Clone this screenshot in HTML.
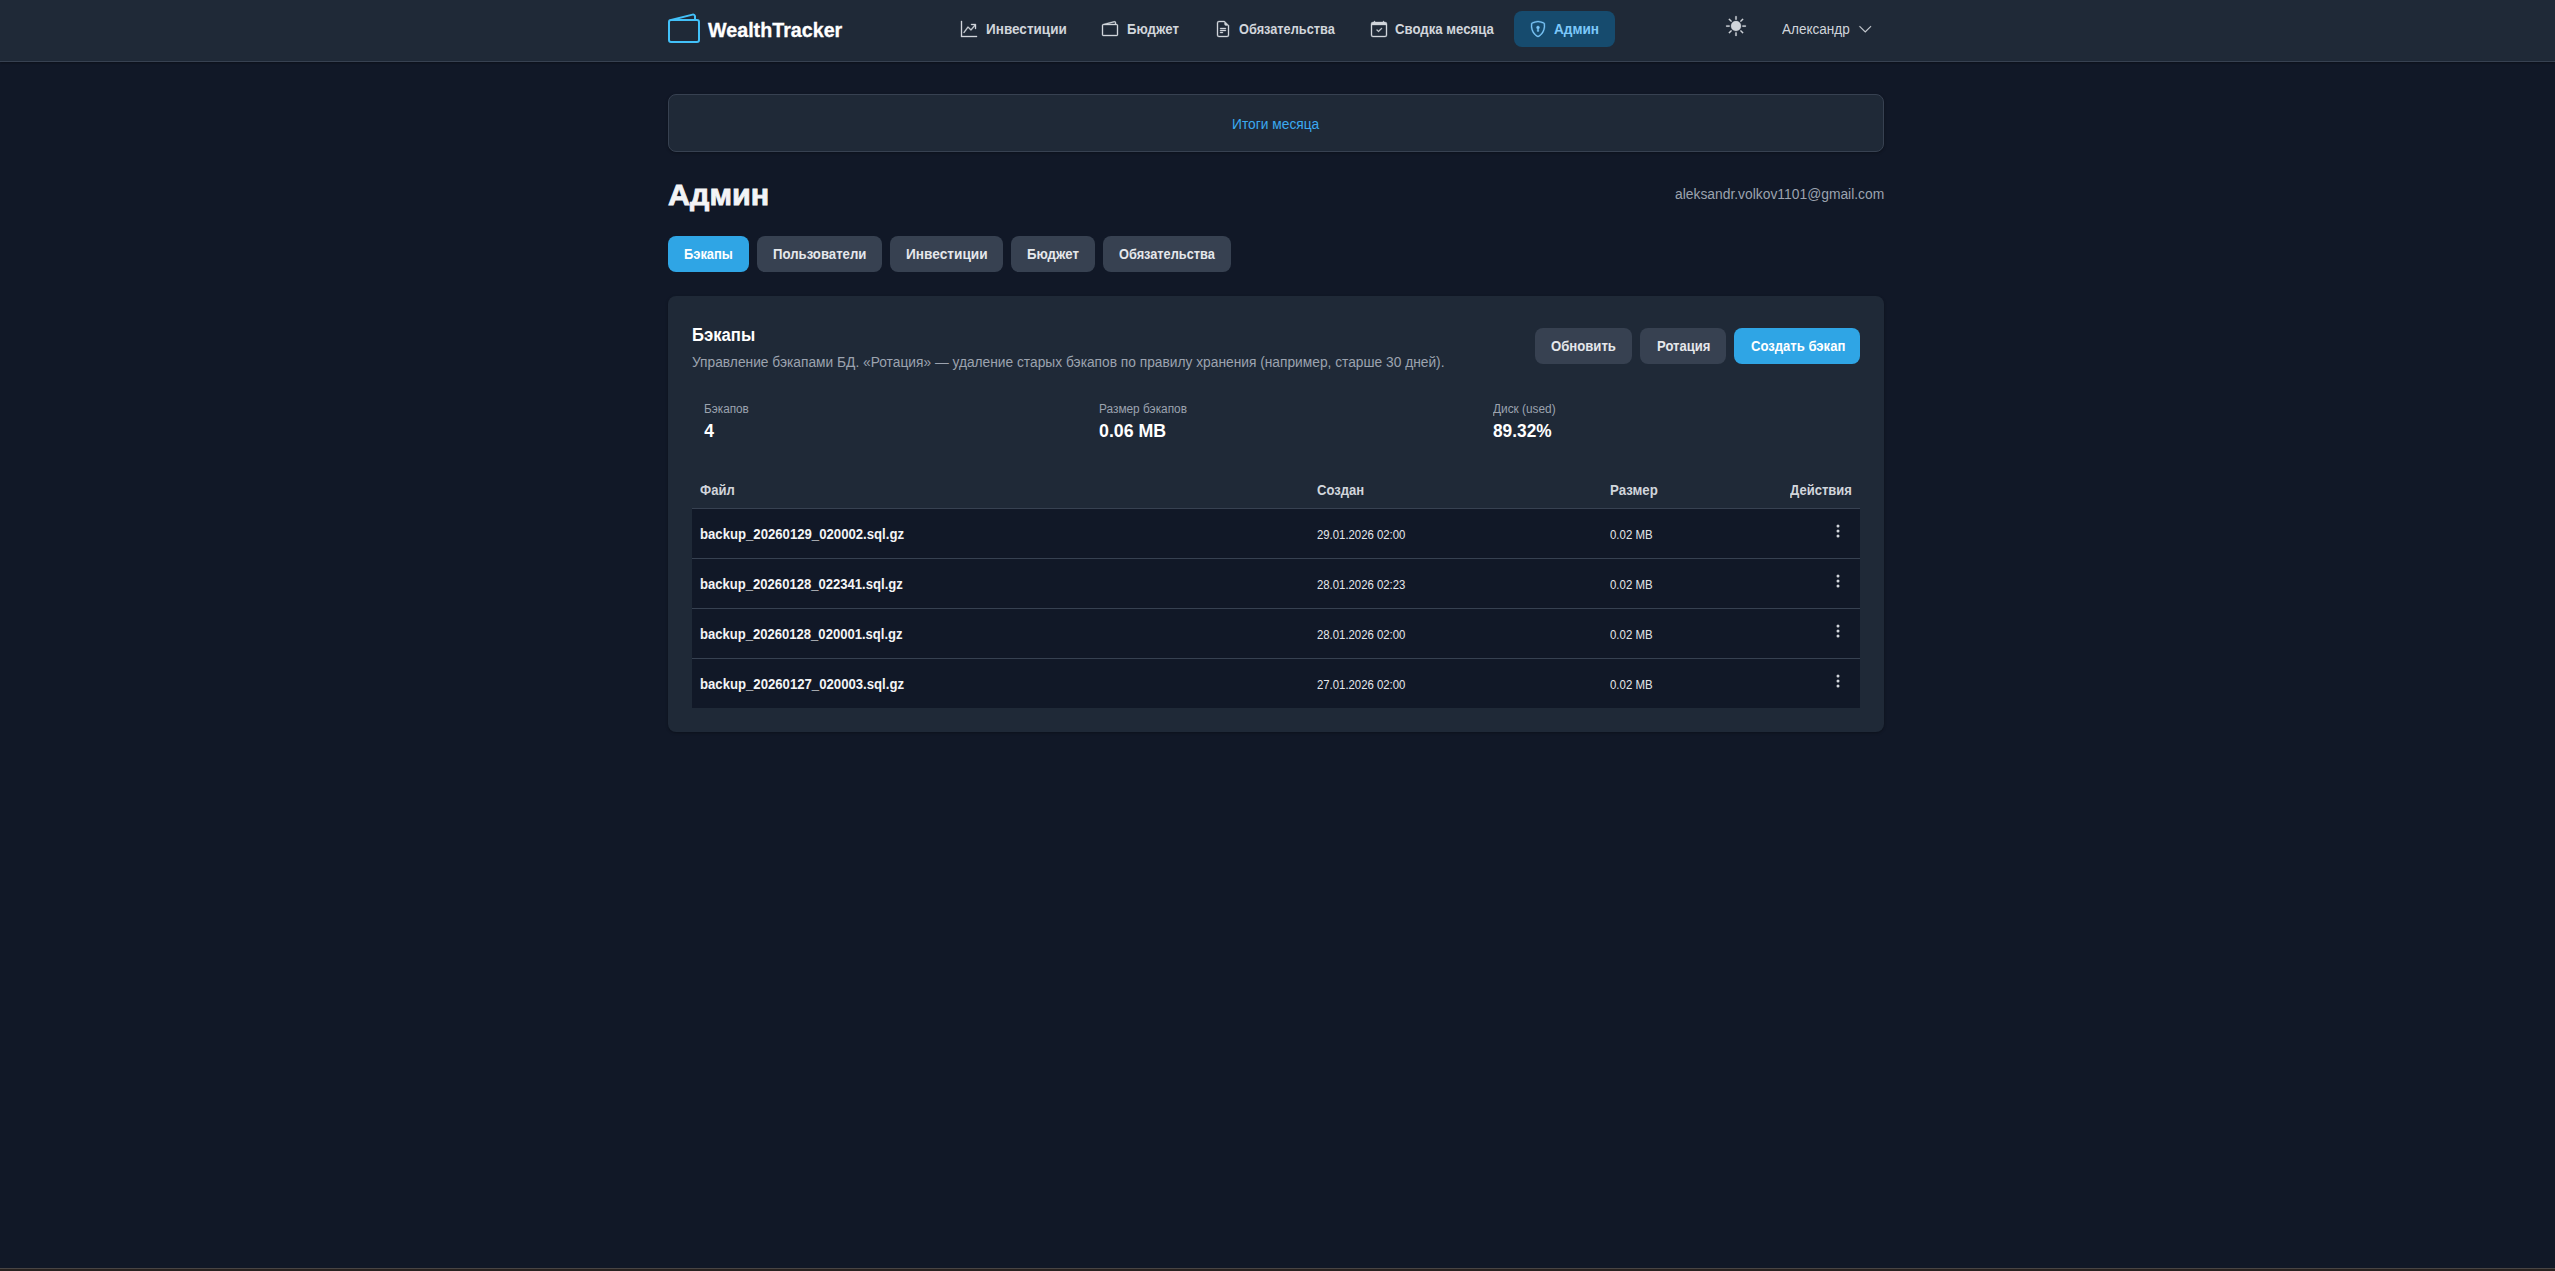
<!DOCTYPE html>
<html lang="ru"><head><meta charset="utf-8"><title>WealthTracker — Админ</title>
<style>
html,body{margin:0;padding:0}
body{width:2555px;height:1271px;background:#111827;position:relative;overflow:hidden;font-family:"Liberation Sans", sans-serif}
span{position:absolute;white-space:nowrap;line-height:1;transform-origin:0 50%}
svg{display:block}
</style></head><body>
<nav>
<div style="position:absolute;left:0px;top:0px;width:2555px;height:61px;background:#1f2937;border-bottom:1px solid #374151;box-shadow:0 1px 2px rgba(0,0,0,.35)"></div>
<svg style="position:absolute;left:668px;top:12.5px;overflow:visible" width="32" height="32" viewBox="0 0 16 16" fill="#42c1f9"><path d="M12.136.326A1.5 1.5 0 0 1 14 1.78V3h.5A1.5 1.5 0 0 1 16 4.5v9a1.5 1.5 0 0 1-1.5 1.5h-13A1.5 1.5 0 0 1 0 13.5v-9a1.5 1.5 0 0 1 1.432-1.499L12.136.326zM5.562 3H13V1.78a.5.5 0 0 0-.621-.484L5.562 3zM1.5 4a.5.5 0 0 0-.5.5v9a.5.5 0 0 0 .5.5h13a.5.5 0 0 0 .5-.5v-9a.5.5 0 0 0-.5-.5h-13z"/></svg>
<div style="position:absolute;left:1514px;top:11px;width:101px;height:36px;background:#164b6e;border-radius:8px"></div>
<svg style="position:absolute;left:961px;top:21px;overflow:visible" width="16" height="16" viewBox="0 0 16 16" fill="#d1d5db" stroke="#d1d5db" stroke-width="0.35" stroke-linejoin="round"><path fill-rule="evenodd" d="M0 0h1v15h15v1H0V0Zm10 3.5a.5.5 0 0 1 .5-.5h4a.5.5 0 0 1 .5.5v4a.5.5 0 0 1-1 0V4.9l-3.613 4.417a.5.5 0 0 1-.74.037L7.06 6.767l-3.656 5.027a.5.5 0 0 1-.808-.588l4-5.5a.5.5 0 0 1 .758-.06l2.609 2.61L13.445 4H10.5a.5.5 0 0 1-.5-.5Z"/></svg>
<svg style="position:absolute;left:1102px;top:21px;overflow:visible" width="16" height="16" viewBox="0 0 16 16" fill="#d1d5db" stroke="#d1d5db" stroke-width="0.35" stroke-linejoin="round"><path d="M12.136.326A1.5 1.5 0 0 1 14 1.78V3h.5A1.5 1.5 0 0 1 16 4.5v9a1.5 1.5 0 0 1-1.5 1.5h-13A1.5 1.5 0 0 1 0 13.5v-9a1.5 1.5 0 0 1 1.432-1.499L12.136.326zM5.562 3H13V1.78a.5.5 0 0 0-.621-.484L5.562 3zM1.5 4a.5.5 0 0 0-.5.5v9a.5.5 0 0 0 .5.5h13a.5.5 0 0 0 .5-.5v-9a.5.5 0 0 0-.5-.5h-13z"/></svg>
<svg style="position:absolute;left:1215px;top:21px;overflow:visible" width="16" height="16" viewBox="0 0 16 16" fill="#d1d5db" stroke="#d1d5db" stroke-width="0.35" stroke-linejoin="round"><path d="M5.5 7a.5.5 0 0 0 0 1h5a.5.5 0 0 0 0-1h-5zM5 9.5a.5.5 0 0 1 .5-.5h5a.5.5 0 0 1 0 1h-5a.5.5 0 0 1-.5-.5zm0 2a.5.5 0 0 1 .5-.5h2a.5.5 0 0 1 0 1h-2a.5.5 0 0 1-.5-.5z"/><path d="M9.5 0H4a2 2 0 0 0-2 2v12a2 2 0 0 0 2 2h8a2 2 0 0 0 2-2V4.5L9.5 0zm0 1v2A1.5 1.5 0 0 0 11 4.5h2V14a1 1 0 0 1-1 1H4a1 1 0 0 1-1-1V2a1 1 0 0 1 1-1h5.5z"/></svg>
<svg style="position:absolute;left:1371px;top:21px;overflow:visible" width="16" height="16" viewBox="0 0 16 16" fill="#d1d5db" stroke="#d1d5db" stroke-width="0.35" stroke-linejoin="round"><path d="M10.854 7.146a.5.5 0 0 1 0 .708l-3 3a.5.5 0 0 1-.708 0l-1.5-1.5a.5.5 0 1 1 .708-.708L7.5 9.793l2.646-2.647a.5.5 0 0 1 .708 0z"/><path d="M3.5 0a.5.5 0 0 1 .5.5V1h8V.5a.5.5 0 0 1 1 0V1h1a2 2 0 0 1 2 2v11a2 2 0 0 1-2 2H2a2 2 0 0 1-2-2V3a2 2 0 0 1 2-2h1V.5a.5.5 0 0 1 .5-.5zM1 4v10a1 1 0 0 0 1 1h12a1 1 0 0 0 1-1V4H1z"/></svg>
<svg style="position:absolute;left:1530px;top:21px;overflow:visible" width="16" height="16" viewBox="0 0 16 16" fill="#7cc8fa" stroke="#7cc8fa" stroke-width="0.35" stroke-linejoin="round"><path d="M5.338 1.59a61.44 61.44 0 0 0-2.837.856.481.481 0 0 0-.328.39c-.554 4.157.726 7.19 2.253 9.188a10.725 10.725 0 0 0 2.287 2.233c.346.244.652.42.893.533.12.057.218.095.293.118a.55.55 0 0 0 .101.025.615.615 0 0 0 .1-.025c.076-.023.174-.061.294-.118.24-.113.547-.29.893-.533a10.726 10.726 0 0 0 2.287-2.233c1.527-1.997 2.807-5.031 2.253-9.188a.48.48 0 0 0-.328-.39c-.651-.213-1.75-.56-2.837-.855C9.552 1.29 8.531 1.067 8 1.067c-.53 0-1.552.223-2.662.524zM5.072.56C6.157.265 7.31 0 8 0s1.843.265 2.928.56c1.11.3 2.229.655 2.887.87a1.54 1.54 0 0 1 1.044 1.262c.596 4.477-.787 7.795-2.465 9.99a11.775 11.775 0 0 1-2.517 2.453 7.159 7.159 0 0 1-1.048.625c-.28.132-.581.24-.829.24s-.548-.108-.829-.24a7.158 7.158 0 0 1-1.048-.625 11.777 11.777 0 0 1-2.517-2.453C1.928 10.487.545 7.169 1.141 2.692A1.54 1.54 0 0 1 2.185 1.43 62.456 62.456 0 0 1 5.072.56z"/><path d="M9.5 6.5a1.5 1.5 0 0 1-1 1.415l.385 1.99a.5.5 0 0 1-.491.595h-.788a.5.5 0 0 1-.49-.595l.384-1.99a1.5 1.5 0 1 1 2-1.415z"/></svg>
<svg style="position:absolute;left:1726px;top:16px;overflow:visible" width="20" height="20" viewBox="0 0 16 16" fill="#d1d5db" stroke="#d1d5db" stroke-width="0.25" stroke-linejoin="round"><path d="M8 12a4 4 0 1 0 0-8 4 4 0 0 0 0 8zM8 0a.5.5 0 0 1 .5.5v2a.5.5 0 0 1-1 0v-2A.5.5 0 0 1 8 0zm0 13a.5.5 0 0 1 .5.5v2a.5.5 0 0 1-1 0v-2A.5.5 0 0 1 8 13zm8-5a.5.5 0 0 1-.5.5h-2a.5.5 0 0 1 0-1h2a.5.5 0 0 1 .5.5zM3 8a.5.5 0 0 1-.5.5h-2a.5.5 0 0 1 0-1h2A.5.5 0 0 1 3 8zm10.657-5.657a.5.5 0 0 1 0 .707l-1.414 1.415a.5.5 0 1 1-.707-.708l1.414-1.414a.5.5 0 0 1 .707 0zm-9.193 9.193a.5.5 0 0 1 0 .707L3.05 13.657a.5.5 0 0 1-.707-.707l1.414-1.414a.5.5 0 0 1 .707 0zm9.193 2.121a.5.5 0 0 1-.707 0l-1.414-1.414a.5.5 0 0 1 .707-.707l1.414 1.414a.5.5 0 0 1 0 .707zM4.464 4.465a.5.5 0 0 1-.707 0L2.343 3.05a.5.5 0 1 1 .707-.707l1.414 1.414a.5.5 0 0 1 0 .708z"/></svg>
<svg style="position:absolute;left:1858px;top:21.75px;overflow:visible" width="14.5" height="14.5" viewBox="0 0 16 16" fill="#d1d5db" stroke="#d1d5db" stroke-width="0.3" stroke-linejoin="round"><path fill-rule="evenodd" d="M1.646 4.646a.5.5 0 0 1 .708 0L8 10.293l5.646-5.647a.5.5 0 0 1 .708.708l-6 6a.5.5 0 0 1-.708 0l-6-6a.5.5 0 0 1 0-.708z"/></svg>
<span style="left:708.35px;top:21.00px;font-size:19.5px;font-weight:700;color:#ffffff;-webkit-text-stroke:0.30px #ffffff;transform:scaleX(1.0100)">WealthTracker</span>
<span style="left:986.00px;top:22.00px;font-size:14px;font-weight:700;color:#d1d5db;transform:scaleX(0.9662)">Инвестиции</span>
<span style="left:1127.00px;top:22.00px;font-size:14px;font-weight:700;color:#d1d5db;transform:scaleX(0.9444)">Бюджет</span>
<span style="left:1239.00px;top:22.00px;font-size:14px;font-weight:700;color:#d1d5db;transform:scaleX(0.9118)">Обязательства</span>
<span style="left:1395.30px;top:22.00px;font-size:14px;font-weight:700;color:#d1d5db;transform:scaleX(0.9414)">Сводка месяца</span>
<span style="left:1554.40px;top:22.00px;font-size:14px;font-weight:700;color:#7cc8fa;transform:scaleX(0.9704)">Админ</span>
<span style="left:1782.00px;top:22.00px;font-size:14px;color:#d1d5db;transform:scaleX(0.9678)">Александр</span>
</nav><main>
<div style="position:absolute;left:668px;top:94px;width:1214px;height:56px;background:#1f2937;border:1px solid #374151;border-radius:8px;box-shadow:0 1px 3px rgba(0,0,0,.3)"></div>
<div style="position:absolute;left:668px;top:236px;width:81px;height:36px;background:#2fa5e5;border-radius:8px"></div>
<div style="position:absolute;left:757px;top:236px;width:125px;height:36px;background:#374151;border-radius:8px"></div>
<div style="position:absolute;left:890px;top:236px;width:113px;height:36px;background:#374151;border-radius:8px"></div>
<div style="position:absolute;left:1011px;top:236px;width:84px;height:36px;background:#374151;border-radius:8px"></div>
<div style="position:absolute;left:1103px;top:236px;width:128px;height:36px;background:#374151;border-radius:8px"></div>
<div style="position:absolute;left:668px;top:296px;width:1216px;height:436px;background:#1f2937;border-radius:8px;box-shadow:0 1px 3px rgba(0,0,0,.3)"></div>
<div style="position:absolute;left:1535px;top:328px;width:97px;height:36px;background:#374151;border-radius:8px"></div>
<div style="position:absolute;left:1640px;top:328px;width:86px;height:36px;background:#374151;border-radius:8px"></div>
<div style="position:absolute;left:1734px;top:328px;width:126px;height:36px;background:#2fa5e5;border-radius:8px"></div>
<div style="position:absolute;left:692px;top:508px;width:1168px;height:1px;background:#374151;"></div>
<div style="position:absolute;left:692px;top:509px;width:1168px;height:49px;background:#111827;"></div>
<div style="position:absolute;left:692px;top:558px;width:1168px;height:1px;background:#374151;"></div>
<svg style="position:absolute;left:1830px;top:523px;overflow:visible" width="16" height="16" viewBox="0 0 16 16" fill="#d1d5db"><path d="M9.5 13a1.5 1.5 0 1 1-3 0 1.5 1.5 0 0 1 3 0zm0-5a1.5 1.5 0 1 1-3 0 1.5 1.5 0 0 1 3 0zm0-5a1.5 1.5 0 1 1-3 0 1.5 1.5 0 0 1 3 0z"/></svg>
<div style="position:absolute;left:692px;top:559px;width:1168px;height:49px;background:#111827;"></div>
<div style="position:absolute;left:692px;top:608px;width:1168px;height:1px;background:#374151;"></div>
<svg style="position:absolute;left:1830px;top:573px;overflow:visible" width="16" height="16" viewBox="0 0 16 16" fill="#d1d5db"><path d="M9.5 13a1.5 1.5 0 1 1-3 0 1.5 1.5 0 0 1 3 0zm0-5a1.5 1.5 0 1 1-3 0 1.5 1.5 0 0 1 3 0zm0-5a1.5 1.5 0 1 1-3 0 1.5 1.5 0 0 1 3 0z"/></svg>
<div style="position:absolute;left:692px;top:609px;width:1168px;height:49px;background:#111827;"></div>
<div style="position:absolute;left:692px;top:658px;width:1168px;height:1px;background:#374151;"></div>
<svg style="position:absolute;left:1830px;top:623px;overflow:visible" width="16" height="16" viewBox="0 0 16 16" fill="#d1d5db"><path d="M9.5 13a1.5 1.5 0 1 1-3 0 1.5 1.5 0 0 1 3 0zm0-5a1.5 1.5 0 1 1-3 0 1.5 1.5 0 0 1 3 0zm0-5a1.5 1.5 0 1 1-3 0 1.5 1.5 0 0 1 3 0z"/></svg>
<div style="position:absolute;left:692px;top:659px;width:1168px;height:49px;background:#111827;"></div>
<svg style="position:absolute;left:1830px;top:673px;overflow:visible" width="16" height="16" viewBox="0 0 16 16" fill="#d1d5db"><path d="M9.5 13a1.5 1.5 0 1 1-3 0 1.5 1.5 0 0 1 3 0zm0-5a1.5 1.5 0 1 1-3 0 1.5 1.5 0 0 1 3 0zm0-5a1.5 1.5 0 1 1-3 0 1.5 1.5 0 0 1 3 0z"/></svg>
<div style="position:absolute;left:0px;top:1268px;width:2555px;height:1px;background:#494544;"></div>
<div style="position:absolute;left:0px;top:1269px;width:2555px;height:2px;background:#27211f;"></div>
<span style="left:1232.12px;top:117.00px;font-size:14px;color:#3ba9f0;transform:scaleX(0.9837)">Итоги месяца</span>
<span style="left:668.20px;top:181.00px;font-size:29px;font-weight:700;color:#f3f4f6;-webkit-text-stroke:0.80px #f3f4f6;transform:scaleX(1.0525)">Админ</span>
<span style="left:1675.00px;top:187.00px;font-size:14px;color:#9ca3af;transform:scaleX(0.9889)">aleksandr.volkov1101@gmail.com</span>
<span style="left:684.40px;top:247.00px;font-size:14px;font-weight:700;color:#ffffff;transform:scaleX(0.9223)">Бэкапы</span>
<span style="left:773.20px;top:247.00px;font-size:14px;font-weight:700;color:#e5e7eb;transform:scaleX(0.9405)">Пользователи</span>
<span style="left:906.00px;top:247.00px;font-size:14px;font-weight:700;color:#e5e7eb;transform:scaleX(0.9759)">Инвестиции</span>
<span style="left:1027.00px;top:247.00px;font-size:14px;font-weight:700;color:#e5e7eb;transform:scaleX(0.9444)">Бюджет</span>
<span style="left:1119.00px;top:247.00px;font-size:14px;font-weight:700;color:#e5e7eb;transform:scaleX(0.9118)">Обязательства</span>
<span style="left:692.05px;top:327.00px;font-size:17.5px;font-weight:700;color:#ffffff;transform:scaleX(0.9533)">Бэкапы</span>
<span style="left:692.40px;top:354.70px;font-size:14px;color:#9ca3af;transform:scaleX(0.9825)">Управление бэкапами БД. «Ротация» — удаление старых бэкапов по правилу хранения (например, старше 30 дней).</span>
<span style="left:1551.00px;top:339.00px;font-size:14px;font-weight:700;color:#e5e7eb;transform:scaleX(0.9380)">Обновить</span>
<span style="left:1656.80px;top:339.00px;font-size:14px;font-weight:700;color:#e5e7eb;transform:scaleX(0.9326)">Ротация</span>
<span style="left:1750.60px;top:339.00px;font-size:14px;font-weight:700;color:#ffffff;transform:scaleX(0.9348)">Создать бэкап</span>
<span style="left:704.30px;top:403.00px;font-size:12px;color:#9ca3af;transform:scaleX(0.9811)">Бэкапов</span>
<span style="left:1099.20px;top:403.00px;font-size:12px;color:#9ca3af;transform:scaleX(0.9865)">Размер бэкапов</span>
<span style="left:1493.40px;top:403.00px;font-size:12px;color:#9ca3af;transform:scaleX(0.9869)">Диск (used)</span>
<span style="left:704.30px;top:423.00px;font-size:17.5px;font-weight:700;color:#ffffff">4</span>
<span style="left:1099.00px;top:423.00px;font-size:17.5px;font-weight:700;color:#ffffff;transform:scaleX(1.0153)">0.06 MB</span>
<span style="left:1493.40px;top:423.00px;font-size:17.5px;font-weight:700;color:#ffffff;transform:scaleX(0.9884)">89.32%</span>
<span style="left:700.10px;top:483.00px;font-size:14px;font-weight:700;color:#d1d5db;transform:scaleX(0.9328)">Файл</span>
<span style="left:1316.80px;top:483.00px;font-size:14px;font-weight:700;color:#d1d5db;transform:scaleX(0.9340)">Создан</span>
<span style="left:1610.00px;top:483.00px;font-size:14px;font-weight:700;color:#d1d5db;transform:scaleX(0.9486)">Размер</span>
<span style="left:1790.30px;top:483.00px;font-size:14px;font-weight:700;color:#d1d5db;transform:scaleX(0.9293)">Действия</span>
<span style="left:700.20px;top:527.00px;font-size:14px;font-weight:700;color:#f3f4f6;transform:scaleX(0.9394)">backup_20260129_020002.sql.gz</span>
<span style="left:1316.80px;top:529.00px;font-size:12px;color:#e5e7eb;transform:scaleX(0.9451)">29.01.2026 02:00</span>
<span style="left:1610.00px;top:529.00px;font-size:12px;color:#e5e7eb;transform:scaleX(0.9533)">0.02 MB</span>
<span style="left:700.20px;top:577.00px;font-size:14px;font-weight:700;color:#f3f4f6;transform:scaleX(0.9339)">backup_20260128_022341.sql.gz</span>
<span style="left:1316.80px;top:579.00px;font-size:12px;color:#e5e7eb;transform:scaleX(0.9451)">28.01.2026 02:23</span>
<span style="left:1610.00px;top:579.00px;font-size:12px;color:#e5e7eb;transform:scaleX(0.9533)">0.02 MB</span>
<span style="left:700.20px;top:627.00px;font-size:14px;font-weight:700;color:#f3f4f6;transform:scaleX(0.9330)">backup_20260128_020001.sql.gz</span>
<span style="left:1316.80px;top:629.00px;font-size:12px;color:#e5e7eb;transform:scaleX(0.9451)">28.01.2026 02:00</span>
<span style="left:1610.00px;top:629.00px;font-size:12px;color:#e5e7eb;transform:scaleX(0.9533)">0.02 MB</span>
<span style="left:700.20px;top:677.00px;font-size:14px;font-weight:700;color:#f3f4f6;transform:scaleX(0.9394)">backup_20260127_020003.sql.gz</span>
<span style="left:1316.80px;top:679.00px;font-size:12px;color:#e5e7eb;transform:scaleX(0.9451)">27.01.2026 02:00</span>
<span style="left:1610.00px;top:679.00px;font-size:12px;color:#e5e7eb;transform:scaleX(0.9533)">0.02 MB</span>
</main>
</body></html>
